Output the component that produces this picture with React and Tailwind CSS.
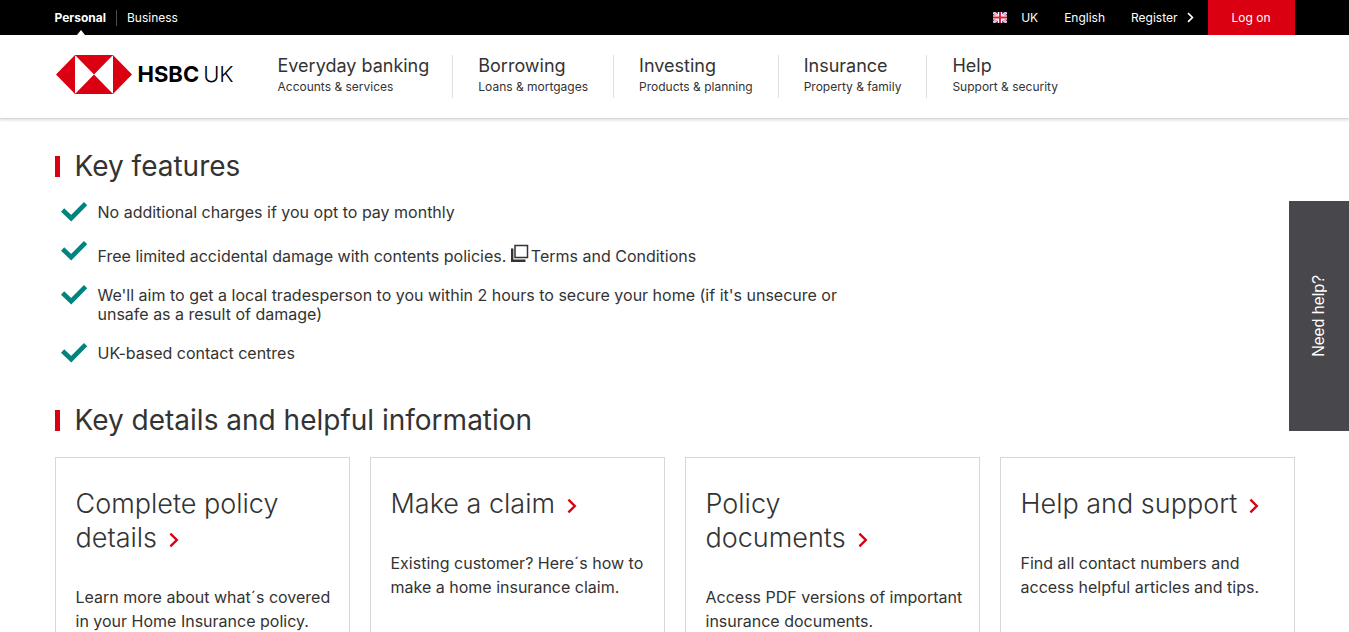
const navItems = [
  { title: 'Everyday banking', text: 'Accounts & services' },
  { title: 'Borrowing', text: 'Loans & mortgages' },
  { title: 'Investing', text: 'Products & planning' },
  { title: 'Insurance', text: 'Property & family' },
  { title: 'Help', text: 'Support & security' },
];

const cards = [
  {
    lead: 'Complete policy',
    last: 'details',
    text: 'Learn more about what´s covered in your Home Insurance policy.',
  },
  {
    lead: 'Make a',
    last: 'claim',
    text: 'Existing customer? Here´s how to make a home insurance claim.',
  },
  {
    lead: 'Policy',
    last: 'documents',
    stacked: true,
    text: 'Access PDF versions of important insurance documents.',
  },
  {
    lead: 'Help and',
    last: 'support',
    text: 'Find all contact numbers and access helpful articles and tips.',
  },
];

function Chevron({ className }) {
  return (
    <svg viewBox="0 0 10 16" fill="none" stroke="currentColor" strokeWidth="2.4" className={className} aria-hidden="true">
      <path d="M1.4 1.6 7.8 8l-6.4 6.4" />
    </svg>
  );
}

function UkFlag() {
  return (
    <svg viewBox="0 0 14 11" className="h-[11px] w-3.5" aria-hidden="true">
      <rect width="14" height="11" fill="#3f4a92" />
      <path d="M0 0 14 11M14 0 0 11" stroke="#fff" strokeWidth="2.4" />
      <path d="M0 0 14 11M14 0 0 11" stroke="#e0475c" strokeWidth="0.8" />
      <path d="M7 0v11M0 5.5h14" stroke="#fff" strokeWidth="4" />
      <path d="M7 0v11M0 5.5h14" stroke="#d4213d" strokeWidth="2" />
    </svg>
  );
}

function Hexagon() {
  return (
    <svg viewBox="0 0 76 39" className="h-[39px] w-[76px]" aria-hidden="true">
      <path fill="#db0011" d="M57 0v39l19-19.500zM38 19.500 57 0H19zM0 19.500 19 39V0zM38 19.500 19 39h38z" />
      <path fill="none" stroke="#db0011" strokeWidth="0.6" d="M19 .3h38M19 38.700h38" />
    </svg>
  );
}

function Tick() {
  return (
    <svg viewBox="0 1 26 19" className="h-[19px] w-[26px] shrink-0 overflow-visible" aria-hidden="true">
      <path d="M1.6 8 10.2 16.2 24.6 1.7" fill="none" stroke="#00847f" strokeWidth="4.6" />
    </svg>
  );
}

function NewWindow() {
  return (
    <svg viewBox="0 0 18 18" className="mr-0.5 inline-block size-[18px] align-baseline" aria-hidden="true">
      <path d="M4 1.500h12.500v12H4z" fill="none" stroke="#333" strokeWidth="1.500" />
      <path d="M1.200 4.500v12.300h13.300" fill="none" stroke="#333" strokeWidth="2.400" />
    </svg>
  );
}

function Feature({ children }) {
  return (
    <li className="flex items-start gap-[11px]">
      <Tick />
      <div>{children}</div>
    </li>
  );
}

function SectionTitle({ children }) {
  return (
    <h2 className="flex items-center gap-[15px] text-[28px] leading-[34px]">
      <span className="h-[21px] w-[5px] bg-[#db0011]" />
      {children}
    </h2>
  );
}

export default function App() {
  return (
    <div className="bg-white font-['Inter','Liberation_Sans',sans-serif] text-[#333]">
      <header className="border-b border-[#d7d8d6] shadow-[0_1px_3px_rgba(0,0,0,0.15)]">
        <div className="bg-black text-xs text-white">
          <div className="mx-auto flex h-[35px] max-w-[1240px] items-center justify-between">
            <nav className="flex h-full items-center">
              <a href="#personal" className="relative flex h-full items-center pr-2.5 font-bold">
                Personal
                <span className="absolute bottom-0 left-[22px] border-x-4 border-b-[5px] border-x-transparent border-b-white" />
              </a>
              <a href="#business" className="border-l border-[#4d4d4d] pl-2.5">Business</a>
            </nav>
            <div className="flex h-full items-center">
              <a href="#region" className="flex items-center gap-3.5">
                <UkFlag />
                UK
              </a>
              <a href="#language" className="ml-[26px]">English</a>
              <a href="#register" className="ml-[26px] flex items-center gap-[9px]">
                Register
                <Chevron className="h-[11px] w-[7px]" />
              </a>
              <a href="#logon" className="ml-3.5 flex h-full w-[87px] items-center justify-center bg-[#db0011]">Log on</a>
            </div>
          </div>
        </div>
        <div className="mx-auto flex max-w-[1240px] items-start pt-5 pb-5">
          <a href="#home" className="flex w-[223px] items-center gap-1.5 pl-px text-[22px] leading-[39px] text-black">
            <Hexagon />
            <span className="flex gap-1">
              <b>HSBC</b> <span className="font-light">UK</span>
            </span>
          </a>
          <nav className="flex">
            {navItems.map((item) => (
              <a
                key={item.title}
                href="#nav"
                className="flex h-[43px] flex-col border-l border-[#e0e0e0] px-[25px] first:border-l-0 first:pr-[23px] first:pl-0"
              >
                <span className="text-lg leading-[22px]">{item.title}</span>
                <span className="text-xs leading-5">{item.text}</span>
              </a>
            ))}
          </nav>
        </div>
      </header>

      <main className="mx-auto max-w-[1240px] pt-[30px]">
        <section>
          <SectionTitle>Key features</SectionTitle>
          <ul className="mt-5 flex max-w-[820px] flex-col gap-5 pl-1.5 text-base leading-[19px]">
            <Feature>No additional charges if you opt to pay monthly</Feature>
            <Feature>
              <div className="pt-0.5">
                Free limited accidental damage with contents policies.{' '}
                <a href="#terms"><NewWindow />Terms and Conditions</a>
              </div>
            </Feature>
            <Feature>
              We'll aim to get a local tradesperson to you within 2 hours to secure your home (if it's unsecure or
              unsafe as a result of damage)
            </Feature>
            <Feature>UK-based contact centres</Feature>
          </ul>
        </section>

        <section className="mt-10">
          <SectionTitle>Key details and helpful information</SectionTitle>
          <div className="mt-5 grid grid-cols-4 gap-5">
            {cards.map((card) => (
              <article key={card.last} className="border border-[#d7d8d6] pt-[29px] pr-2.5 pb-10 pl-5">
                <h3 className="text-[27px] leading-[34px] font-light">
                  <a href="#card">
                    {card.lead} {card.stacked && <br />}
                    <span className="whitespace-nowrap">
                      {card.last}
                      <Chevron className="ml-3 inline-block h-4 w-2.5 align-[-1px] text-[#db0011]" />
                    </span>
                  </a>
                </h3>
                <p className="mt-[30px] text-base leading-6">{card.text}</p>
              </article>
            ))}
          </div>
        </section>
      </main>

      <button
        type="button"
        className="fixed top-1/2 right-0 flex h-[230px] w-[60px] -translate-y-1/2 items-center justify-center bg-[#48474b] font-['Liberation_Sans',sans-serif] text-base text-white"
      >
        <span className="rotate-180 [writing-mode:vertical-rl]">Need help?</span>
      </button>
    </div>
  );
}
